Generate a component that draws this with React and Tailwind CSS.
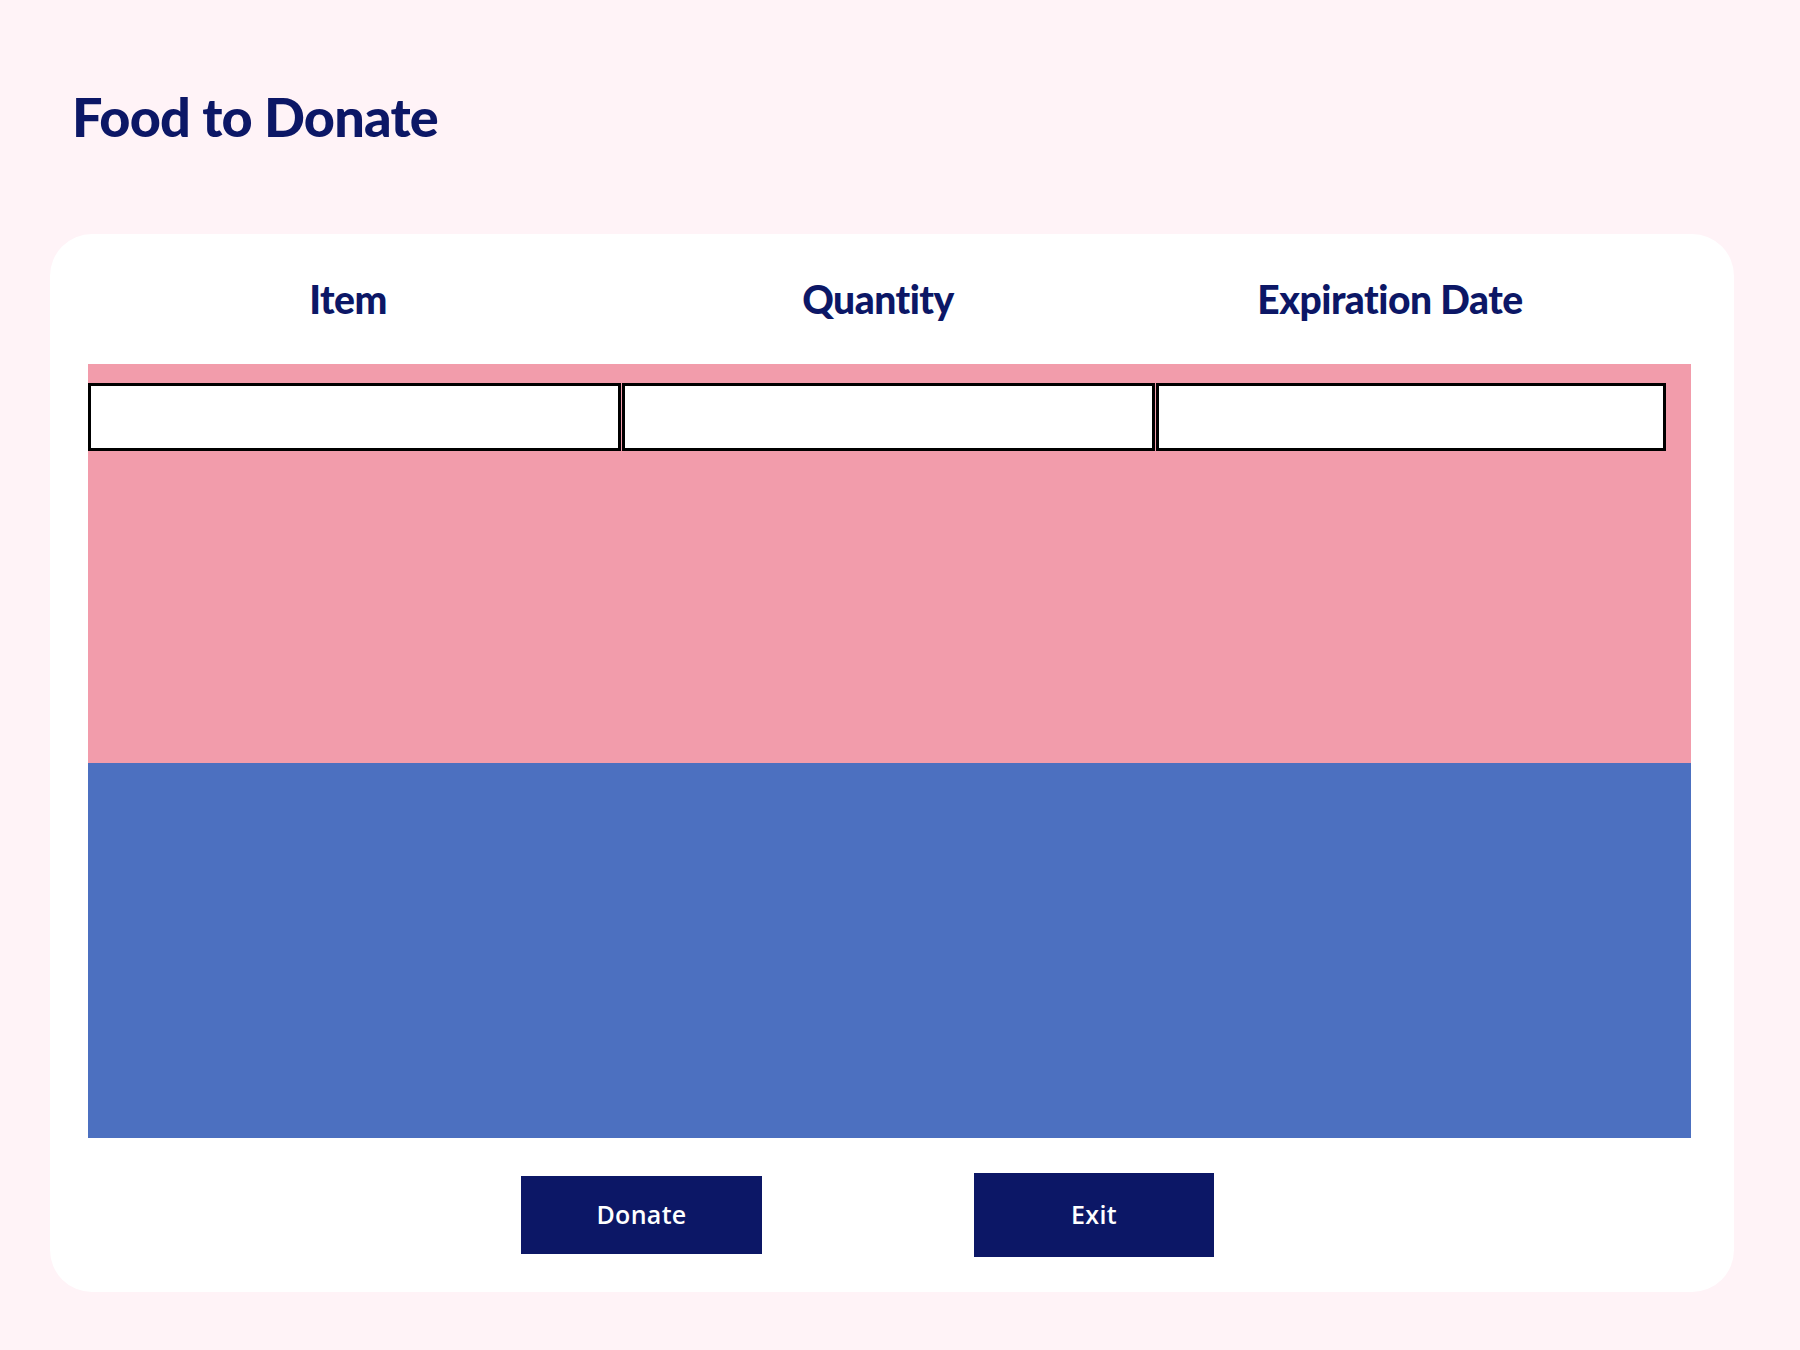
import React from 'react';

const columns = [
  { label: 'Item', width: 'w-[520px]' },
  { label: 'Quantity', width: 'w-[540px]' },
  { label: 'Expiration Date', width: 'w-[484px]' },
];

const App = () => {
  return (
    <div className="h-[1350px] bg-[#fff3f7] pt-[85px] font-['Lato',sans-serif] overflow-hidden">
      <h1 className="ml-[72px] text-[54px] font-black leading-[1.2] tracking-[-0.8px] text-[#0c1766]">
        Food to Donate
      </h1>

      <div className="mt-[84px] ml-[50px] w-[1684px] h-[1058px] bg-white rounded-[42px] pt-[42px] pl-[38px]">
        {/* column headings */}
        <div className="flex h-[47px]">
          {columns.map((col) => (
            <div
              key={col.label}
              className={`${col.width} text-center text-[39px] font-black leading-[1.2] tracking-[-0.5px] text-[#0c1766]`}
            >
              {col.label}
            </div>
          ))}
        </div>

        {/* entry area */}
        <div className="mt-[41px] w-[1603px] h-[399px] bg-[#f29cab] pt-[19px]">
          <div className="flex gap-[1px]">
            <input className="w-[533px] h-[68px] border-[3px] border-black bg-white outline-none" />
            <input className="w-[533px] h-[68px] border-[3px] border-black bg-white outline-none" />
            <input className="w-[510px] h-[68px] border-[3px] border-black bg-white outline-none" />
          </div>
        </div>
        <div className="w-[1603px] h-[375px] bg-[#4c70c0]" />

        {/* actions */}
        <div className="flex items-center h-[154px] pl-[433px] gap-[212px]">
          <button className="w-[241px] h-[78px] bg-[#0c1766] text-white text-[25px] font-semibold tracking-[0.3px] font-['Open_Sans',sans-serif]">
            Donate
          </button>
          <button className="w-[240px] h-[84px] bg-[#0c1766] text-white text-[25px] font-semibold tracking-[0.3px] font-['Open_Sans',sans-serif]">
            Exit
          </button>
        </div>
      </div>
    </div>
  );
};

export default App;
